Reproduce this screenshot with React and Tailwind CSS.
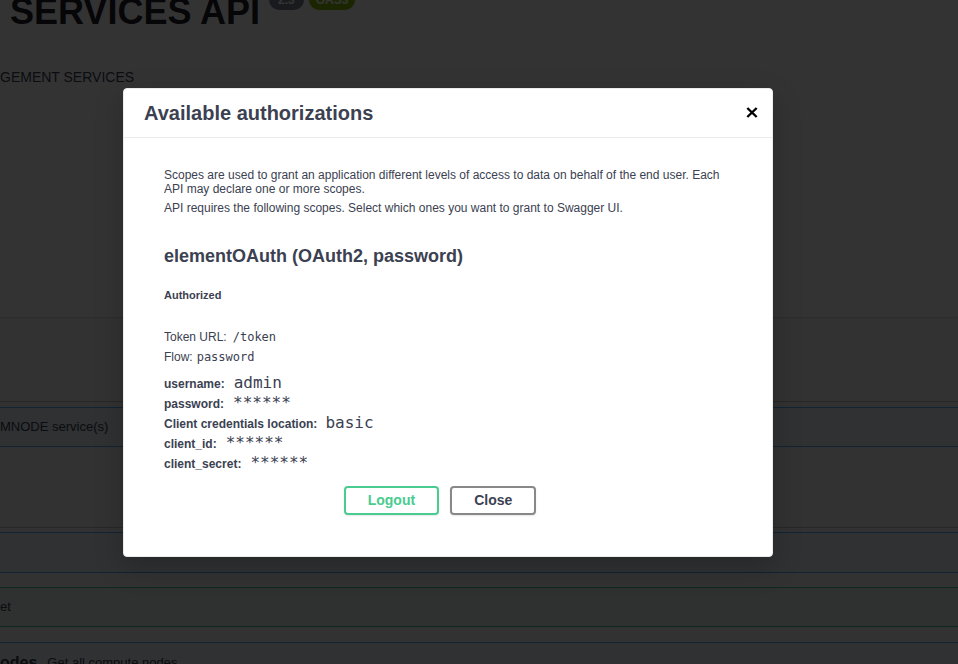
export default function App() {
  const mono = "font-['DejaVu_Sans_Mono','Liberation_Mono',monospace] text-[#3b4151]";
  return (
    <div className="relative w-[958px] h-[664px] overflow-hidden bg-[#fafafa] text-[#3b4151] font-['Liberation_Sans',Arial,sans-serif]">
      {/* background page */}
      <div className="flex flex-col h-[317px] bg-white shadow-[0_1px_2px_0_rgba(0,0,0,0.15)]">
        <div className="flex items-start pl-[10px] mt-[-9px]">
          <h2 className="text-[36px] font-bold leading-[42px] text-[#1f2229]">SERVICES API</h2>
          <span className="ml-[9px] mt-[-1px] rounded-full bg-[#7d8492] px-[9px] text-[12px] font-bold leading-[20px] text-white">2.3</span>
          <span className="ml-[5px] mt-[-1px] rounded-full bg-[#89bf04] px-[7px] text-[12px] font-bold leading-[20px] text-white">OAS3</span>
        </div>
        <p className="mt-[36px] text-[14px] leading-[17px]">GEMENT SERVICES</p>
      </div>
      <div className="h-[85px] border-b border-[rgba(59,65,81,0.3)]"></div>
      <div className="mt-[5px] h-[40px] border-y border-[#61affe] bg-[rgba(97,175,254,0.1)] flex items-center text-[13px]">
        MNODE service(s)
      </div>
      <div className="h-[81px] border-b border-[rgba(59,65,81,0.3)]"></div>
      <div className="mt-[4px] h-[41px] border-y border-[#61affe] bg-[rgba(97,175,254,0.1)]"></div>
      <div className="mt-[14px] h-[40px] border-y border-[#49cc90] bg-[rgba(73,204,144,0.1)] flex items-center text-[13px]">
        et
      </div>
      <div className="mt-[15px] h-[40px] border-t border-[#61affe] bg-[rgba(97,175,254,0.1)] flex items-center">
        <span className="text-[16px] font-bold">odes</span>
        <span className="ml-[10px] text-[13px]">Get all compute nodes</span>
      </div>

      {/* overlay */}
      <div className="absolute inset-0 bg-black/80"></div>

      {/* modal */}
      <div className="absolute left-[123px] top-[88px] w-[650px] bg-white border border-[#ebebeb] rounded-[4px] shadow-[0_10px_30px_0_rgba(0,0,0,0.2)]">
        <div className="flex items-center justify-between h-[49px] border-b border-[#ebebeb] pl-[20px] pr-[14px]">
          <h3 className="text-[20px] font-bold leading-[26px] text-[#3b4151]">Available authorizations</h3>
          <button className="flex items-center justify-center mb-[2px]">
            <svg width="12" height="11" viewBox="0 0 12 11">
              <path d="M1.3 1 L10.7 10 M10.7 1 L1.3 10" stroke="#000" strokeWidth="2.4" fill="none" />
            </svg>
          </button>
        </div>
        <div className="p-[20px]">
          <div className="px-[20px] py-[10px]">
            <p className="text-[12px] leading-[14px]">
              Scopes are used to grant an application different levels of access to data on behalf of the end user. Each
              <br />
              API may declare one or more scopes.
            </p>
            <p className="mt-[5px] text-[12px] leading-[14px]">
              API requires the following scopes. Select which ones you want to grant to Swagger UI.
            </p>
            <h4 className="mt-[30px] text-[18px] font-bold leading-[22px]">elementOAuth (OAuth2, password)</h4>
            <h6 className="mt-[22px] text-[11px] font-bold leading-[13px]">Authorized</h6>
            <div className="mt-[25px] flex items-baseline h-[20px] leading-[20px]">
              <span className="text-[12px]">Token URL:</span>
              <code className={`ml-[6px] text-[12px] ${mono}`}>/token</code>
            </div>
            <div className="flex items-baseline h-[20px] leading-[20px]">
              <span className="text-[12px]">Flow:</span>
              <code className={`ml-[4px] text-[12px] ${mono}`}>password</code>
            </div>
            <div className="mt-[6px] flex items-baseline h-[20px] leading-[20px]">
              <span className="text-[12px] font-bold">username:</span>
              <code className={`ml-[9px] text-[16px] ${mono}`}>admin</code>
            </div>
            <div className="flex items-baseline h-[20px] leading-[20px]">
              <span className="text-[12px] font-bold">password:</span>
              <code className={`ml-[9px] text-[16px] ${mono}`}>******</code>
            </div>
            <div className="flex items-baseline h-[20px] leading-[20px]">
              <span className="text-[12px] font-bold">Client credentials location:</span>
              <code className={`ml-[8px] text-[16px] ${mono}`}>basic</code>
            </div>
            <div className="flex items-baseline h-[20px] leading-[20px]">
              <span className="text-[12px] font-bold">client_id:</span>
              <code className={`ml-[9px] text-[16px] ${mono}`}>******</code>
            </div>
            <div className="flex items-baseline h-[20px] leading-[20px]">
              <span className="text-[12px] font-bold">client_secret:</span>
              <code className={`ml-[9px] text-[16px] ${mono}`}>******</code>
            </div>
            <div className="flex justify-center pt-[13px] pb-[11px]">
              <button className="mr-[11px] border-2 border-[#49cc90] text-[#49cc90] rounded-[4px] px-[22px] py-[4px] text-[14px] font-bold leading-[17px] bg-transparent shadow-[0_1px_2px_rgba(0,0,0,0.1)]">
                Logout
              </button>
              <button className="mr-[16px] border-2 border-[#888888] text-[#3b4151] rounded-[4px] px-[22px] py-[4px] text-[14px] font-bold leading-[17px] bg-transparent shadow-[0_1px_2px_rgba(0,0,0,0.1)]">
                Close
              </button>
            </div>
          </div>
        </div>
      </div>
    </div>
  );
}
